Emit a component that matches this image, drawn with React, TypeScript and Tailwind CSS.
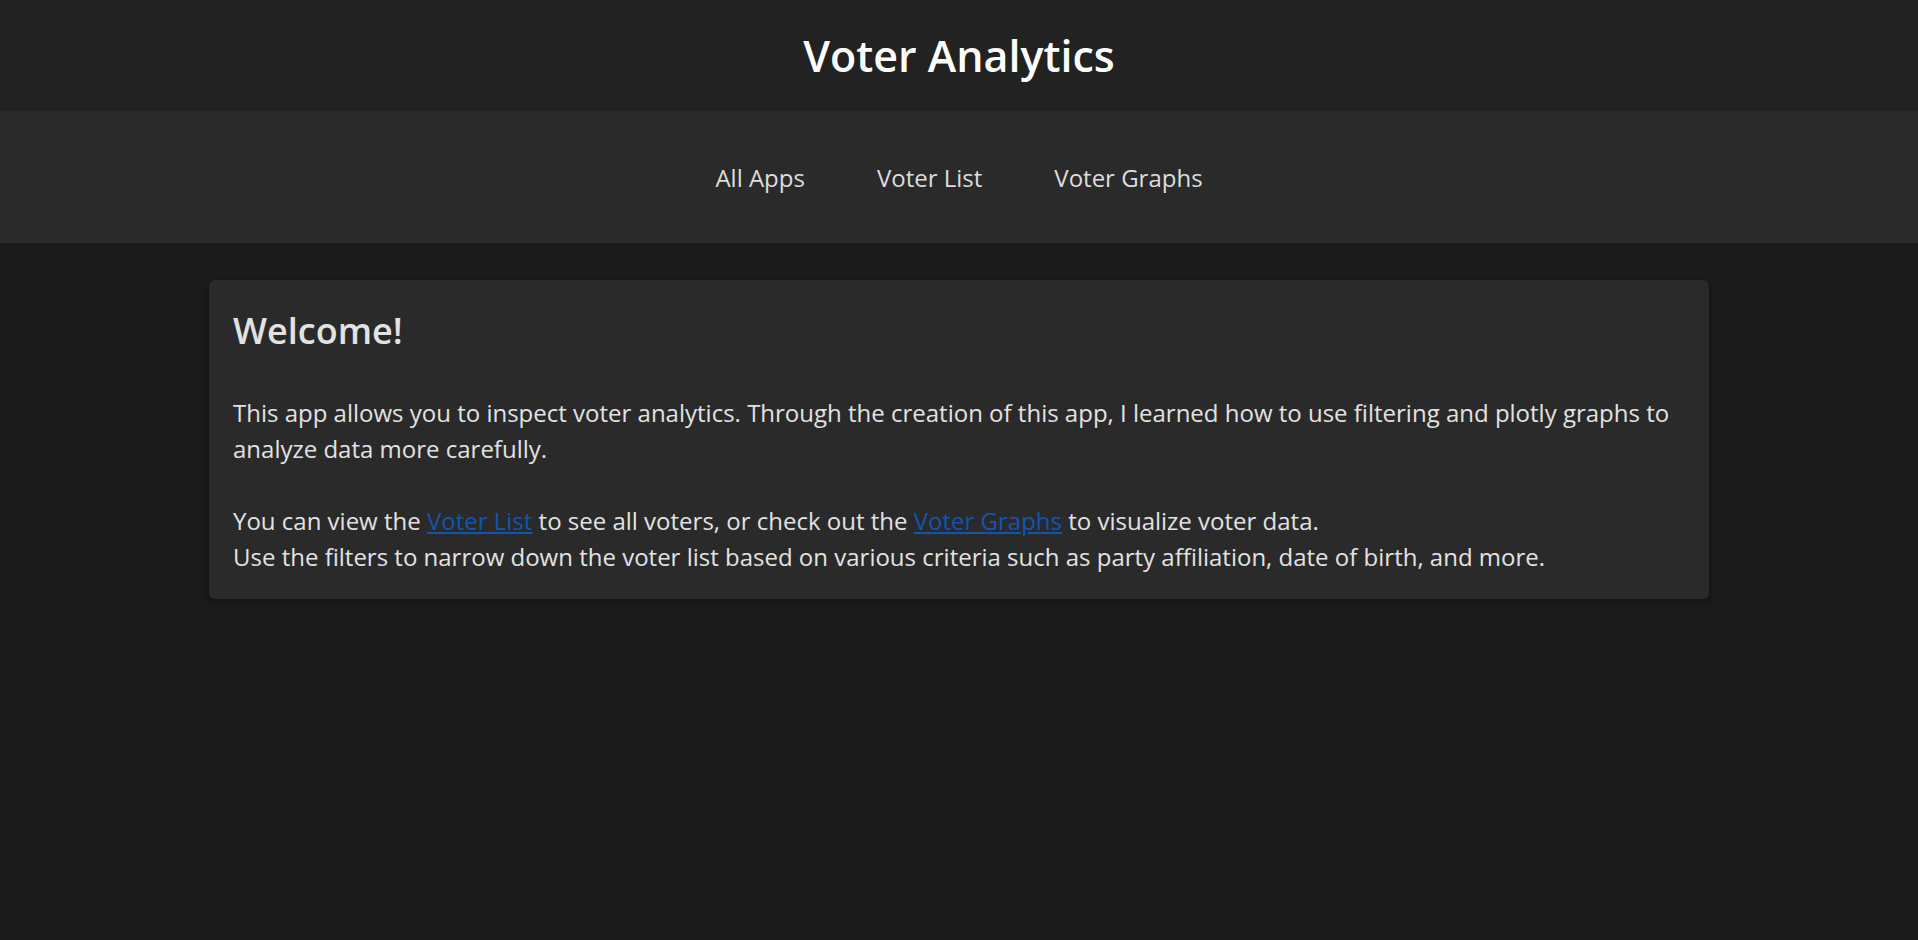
export default function App() {
  return (
    <div className="min-h-[940px] bg-[#1b1b1b] font-['Open_Sans',sans-serif]">
      <header className="h-[111px] bg-[#222222] flex items-center justify-center">
        <h1 className="text-[43px] font-semibold text-white leading-none">Voter Analytics</h1>
      </header>

      <nav className="h-[132px] pt-[2px] bg-[#2a2a2a] flex items-center justify-center gap-[72px] text-[24px] text-[#dddddd]">
        <a href="#">All Apps</a>
        <a href="#">Voter List</a>
        <a href="#">Voter Graphs</a>
      </nav>

      <main className="pt-[37px] flex justify-center">
        <div className="w-[1500px] bg-[#2a2a2a] rounded-md shadow-[0_2px_6px_rgba(0,0,0,0.4)] p-6 text-[#e2e2e2]">
          <h2 className="text-[36px] font-semibold leading-[1.2] mt-[5px] mb-[43px]">Welcome!</h2>
          <p className="text-[24px] leading-[36px]">
            This app allows you to inspect voter analytics. Through the creation of this app, I learned how to use
            filtering and plotly graphs to analyze data more carefully.
          </p>
          <p className="text-[24px] leading-[36px] mt-[36px]">
            You can view the{" "}
            <a href="#" className="text-[#1155b0] underline">
              Voter List
            </a>{" "}
            to see all voters, or check out the{" "}
            <a href="#" className="text-[#1155b0] underline">
              Voter Graphs
            </a>{" "}
            to visualize voter data.
            <br />
            Use the filters to narrow down the voter list based on various criteria such as party affiliation, date of
            birth, and more.
          </p>
        </div>
      </main>
    </div>
  );
}
